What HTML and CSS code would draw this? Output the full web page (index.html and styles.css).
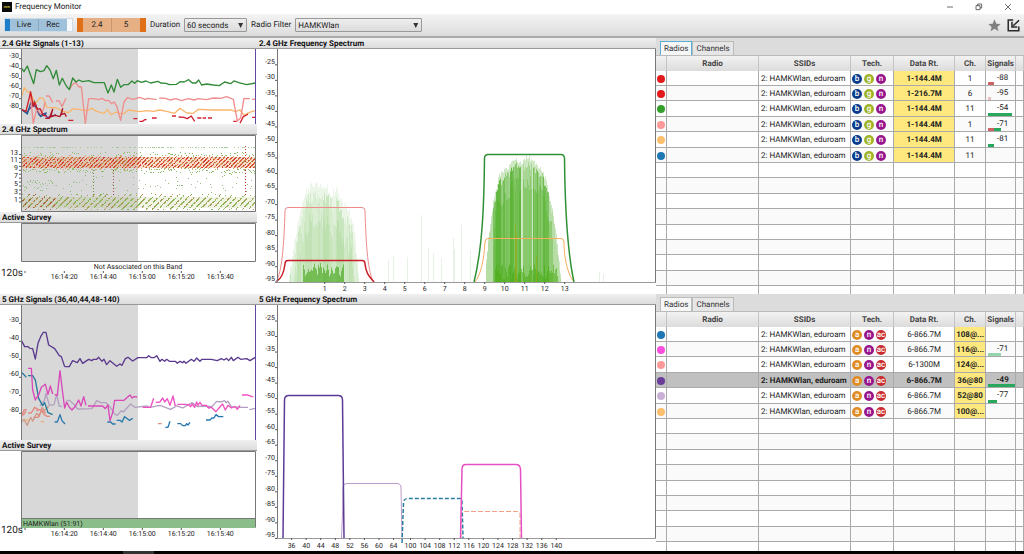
FILE: index.html
```html
<!DOCTYPE html>
<html lang="en">
<head>
<meta charset="utf-8">
<title>Frequency Monitor</title>
<link rel="stylesheet" href="styles.css">
</head>
<body>
<header class="titlebar">
  <svg class="app-icon" viewBox="0 0 30 30"><rect width="30" height="30" fill="#0a0a0a"/><path d="M5 13h20v4H5z" fill="#8d8420"/><path d="M8 14h3M13 14h3M18 14h4" stroke="#e8d840" stroke-width="2"/></svg>
  <h1>Frequency Monitor</h1>
  <div class="window-buttons">
    <button aria-label="Minimize"><svg viewBox="0 0 24 24"><path d="M3 12h18"/></svg></button>
    <button aria-label="Restore"><svg viewBox="0 0 24 24"><path d="M3 8h12v12H3zM8 8V3h12v12h-5"/></svg></button>
    <button aria-label="Close"><svg viewBox="0 0 24 24"><path d="M3 3l18 18M21 3L3 21"/></svg></button>
  </div>
</header>
<nav class="toolbar">
  <div class="group blue"><button>Live</button><button>Rec</button></div>
  <div class="group orange"><button>2.4</button><button>5</button></div>
  <label for="duration">Duration</label>
  <span class="select short"><select id="duration"><option>60 seconds</option></select></span>
  <label for="filter">Radio Filter</label>
  <span class="select long"><select id="filter"><option>HAMKWlan</option></select></span>
  <div class="tools">
    <button aria-label="Favorite"><svg viewBox="0 0 36 36"><path d="M18 1l5 12 12 1-9 8 3 12-11-7-11 7 3-12-9-8 12-1z" fill="#808080"/></svg></button>
    <button aria-label="Import"><svg viewBox="0 0 42 42"><path d="M20 3H4v35h34V24" fill="none" stroke="#2d2d2d" stroke-width="5"/><path d="M39 4L20 22M16 9v17h17" fill="none" stroke="#2d2d2d" stroke-width="5"/></svg></button>
  </div>
</nav>
<main>
  <section class="charts">
    <h2>2.4 GHz Signals (1-13)</h2>
    <svg id="sig24" viewBox="0 49 257 75">
      <rect class="past" x="21" y="49" width="117" height="75"/>
      <g class="lines" transform="translate(0 36) scale(.3333)">
        <polyline stroke="#6a3d9a" points="64,221 80,230 100,205 108,215 118,238 134,232 142,245 168,236"/>
        <polyline stroke="#1f5f8f" points="64,219 82,234 92,200 98,208 102,194 112,220 122,242 140,230"/>
        <polyline stroke="#f9b56b" points="64,185 73,155 82,168 90,167 96,180 104,205 120,185 130,188 140,214 170,216 190,226 206,230 218,218 260,224 275,217 290,226 312,232 322,221 333,235 350,228 360,233 372,233 385,222 420,227 440,224 460,226 480,222 500,226 524,232 540,217 560,231 580,232 595,220 640,222 694,222 706,227 720,222 732,238 748,229 766,224"/>
        <polyline stroke="#f08d8d" points="90,167 100,262 110,218 122,235 130,220 136,198"/>
        <polyline stroke="#f08d8d" points="138,180 148,180 158,200"/>
        <polyline stroke="#f08d8d" points="168,195 178,195 186,212 198,187"/>
        <polyline stroke="#f08d8d" points="208,160 218,145 228,139 236,153 244,152 256,262 266,188 280,188 296,191 306,187 316,194 326,193 334,203 342,198 350,210 362,253 372,198 382,185 400,190 418,184 436,190 444,187 470,191"/>
        <polyline stroke="#f08d8d" points="478,186 496,187 510,192 528,188 544,194 566,188 582,192 596,188 620,191 640,186 662,187 680,182 700,190 712,255 722,246 732,187 750,188"/><path stroke="#f08d8d" d="M756 190h12"/>
        <polyline stroke="#cc2028" points="64,220 78,226 92,168 100,212 104,198 112,220 120,218 130,238 138,240"/>
        <polyline stroke="#b01525" points="136,247 148,247 158,220 152,243 166,238 180,242 188,218 184,236 194,232 199,242"/>
        <path stroke="#d32030" d="M205 253h15M400 248h12M418 256h10l6-5h6M456 246h14M516 240h12M536 243l16 1l10 4l12-8l10 16M592 246h12M608 246h10M624 246h12M700 256h10M720 262l10-20l10-5l4-3M756 244h11"/>
        <polyline stroke="#308a38" points="64,96 72,107 82,90 101,143 109,101 121,107 132,104 140,89 150,102 160,128 169,103 178,147 187,127 199,150 208,161 218,126 228,138 236,132 248,137 266,134 282,140 313,140 324,171 334,147 342,168 352,130 362,154 372,146 384,146 396,135 404,142 412,134 424,139 438,135 452,141 474,136 482,141 498,142 508,146 530,145 540,137 552,138 566,131 577,141 588,141 596,132 605,147 620,144 640,147 658,149 674,138 692,143 702,135 716,140 740,146 766,141"/>
      </g>
      <path class="axis" d="M21.500 49V124"/><path stroke="#6048a0" d="M255.500 49V124"/>
    </svg>
    <h2>2.4 GHz Spectrum</h2>
    <svg id="spec24" viewBox="0 135 257 77"><rect class="past" x="21" y="135" width="117" height="77"/><rect x="22" y="157" width="233" height="11" fill="#e8803c" opacity=".28"/><rect x="22" y="197" width="233" height="11" fill="#a0b850" opacity=".15"/><g id="noise"></g><path class="frame" d="M21.500 135.500H255.500V211.500H21.500z"/></svg>
    <h2>Active Survey</h2>
    <svg id="time24" viewBox="0 223 257 71"><rect class="past" x="21" y="223" width="117" height="38"/><path class="frame" d="M21.500 223.500H255.500V261.500H21.500z"/><text class="note" x="138" y="269">Not Associated on this Band</text><text class="span" x="1" y="276">120s</text></svg>
  </section>
  <section class="charts">
    <h2>2.4 GHz Frequency Spectrum</h2>
    <svg id="freq24" viewBox="257 49 399 245">
      <g id="bins"></g>
      <g class="lines thin">
        <path stroke="#e57f7f" d="M374 282.500H475"/>
        <path stroke="#ee8a8a" d="M276 282C282 272 284 245 285 211Q285 207.500 288 207.500H362Q365 207.500 365 211C366 245 368 275 374 282"/>
        <path class="bold" stroke="#c81e28" d="M277 281C282 278 284 272 285 264Q285 260.500 288 260.500H362Q365 260.500 365 264C366 274 370 277 374 282"/>
        <path stroke="#f7ae5e" d="M475 282C480 276 484 262 485 242Q485 238.500 488 238.500H561Q564 238.500 564 242C564 262 569 276 574 282"/>
        <path class="bold" stroke="#2f9136" d="M474 282C482 250 484 210 484.500 158Q485 154.500 488 154.500H561Q564 154.500 564.500 158C565 210 567 250 574 282"/>
      </g>
      <path class="axis" d="M277.500 49V282.500M574 282.500H655.500V49"/><path class="floor" d="M277 282.500H655"/>
    </svg>
  </section>
  <section class="panel" id="panel24"></section>
  <section class="charts">
    <h2>5 GHz Signals (36,40,44,48-140)</h2>
    <svg id="sig5" viewBox="0 305 257 135">
      <rect class="past" x="21" y="305" width="117" height="135"/>
      <g class="lines" transform="translate(0 290) scale(.3333)">
        <polyline stroke="#d09a88" points="64,397 72,388 82,406 92,382 98,394 110,370 118,378 126,352 134,362 146,348"/>
        <path stroke="#e08a80" d="M64 380l8-20l8-2M70 376l8-14M84 369h10l10-17l14 8M100 382h14l12-22l12 10M108 362l16-4l8 16l10 5h8M474 401h11"/>
        <path stroke="#eab070" d="M122 395h10M76 390h10"/>
        <polyline stroke="#b3a0c0" points="120,348 134,330 138,310 148,346 162,344 170,314 178,348 186,350"/>
        <polyline stroke="#b3a0c0" points="200,331 208,331 224,345 232,357 276,356 290,332 302,338 318,338 328,348 344,372 352,376 364,362 370,366 392,342 404,352 440,348 450,352 480,346 500,354 512,358 530,348 548,354 576,338 592,350 612,348 636,350 650,334 664,336 674,332 678,338 684,334 694,350 720,352 744,352"/><path stroke="#b3a0c0" d="M748 359l18-4"/>
        <polyline stroke="#28789c" points="64,247 72,254 79,262"/><polyline stroke="#28789c" points="84,257 98,257 106,270 116,325 128,347 134,338 144,368 158,374"/>
        <path stroke="#2878ac" d="M164 396h8l8-22l6 18l9 10M322 396h10l6 6h9M350 391h10l6 5l8-16l14 11l10-6M496 412h8l6-18M532 401h10l6 6h8l4-6l4 4l6-8M618 390h12l6-6h6l6-10l8 6h14"/>
        <polyline stroke="#d948b8" points="84,235 94,235 98,300 106,330 116,315 124,292 136,283 144,313 151,288 158,312"/><polyline stroke="#d948b8" points="164,314 172,316 180,242 187,300 194,354 200,336 208,352 216,360 226,349 236,330 243,348 251,320 258,346"/>
        <polyline stroke="#d948b8" points="264,348 308,348 316,356 324,345 330,392 338,368 344,331 372,331 390,315 396,324 402,320 411,321"/>
        <polyline stroke="#ee50c0" points="428,352 452,352 461,325"/><polyline stroke="#ee50c0" points="467,337 480,336 488,324 494,336 502,326 510,346 519,318 526,348"/><polyline stroke="#ee50c0" points="532,343 550,343 566,344 572,350 576,342 584,352 590,336 594,346 600,337 606,346 618,346 626,354 634,352 648,365 662,348 668,342 676,360 684,346 694,354 706,350 712,358 720,346"/><path stroke="#ee50c0" d="M726 315h16l14 5h4"/>
        <polyline stroke="#5b3a8e" points="64,151 74,170 84,170 90,175 98,176 106,207 114,160 122,140 130,127 138,127 146,165 164,176 178,197 184,200 194,230"/>
        <polyline stroke="#5b3a8e" points="194,230 208,230 218,212 232,218 240,206 248,220 266,208 276,212 280,208 290,208 296,202 306,214 312,208 320,224 330,212 350,229 360,222 366,226 376,206 384,202 398,213 414,203 440,203 446,197 454,203 462,203 470,197 480,214 486,208 494,214 500,208 508,214 526,214 532,220 540,214 548,218 552,214 558,220 574,208 582,214 590,204 600,214 606,208 634,208 652,212 664,206 672,210 680,205 686,212 694,202 700,212 714,202 722,208 740,206 750,212 766,202"/>
      </g>
      <path class="axis" d="M21.500 305V440"/><path stroke="#6048a0" d="M255.500 305V440"/>
    </svg>
    <h2>Active Survey</h2>
    <svg id="time5" viewBox="0 451 257 100"><rect class="past" x="21" y="451" width="117" height="67"/><rect x="21" y="518" width="235" height="10" fill="#8bbd8b"/><path class="frame" d="M21.500 527V451.500H255.500V527M21 518.500H256"/><text x="23" y="526">HAMKWlan (51:91)</text><text class="span" x="1" y="533">120s</text></svg>
  </section>
  <section class="charts">
    <h2>5 GHz Frequency Spectrum</h2>
    <svg id="freq5" viewBox="257 305 399 246">
      <path class="axis" d="M277.500 305V538.500M655.500 305V538.500"/><path class="floor" d="M277 538.500H655.500"/>
      <g class="lines thin">
        <path stroke="#bb9bc9" d="M341.500 538Q343 510 343 487Q343 483.500 347 483.500H397Q401 483.500 401 488L402 538"/>
        <path class="bold" stroke="#5b3a96" d="M283 538L284.500 400Q284.500 395.500 289 395.500H338Q342.500 395.500 342.500 400L344 538"/>
        <path class="bold" stroke="#2a7f9f" stroke-dasharray="4 2" d="M402 543L403.500 503Q403.500 498.500 408 498.500H460Q462 498.500 462 503L463 538"/>
        <path stroke="#f2a080" stroke-dasharray="5 2" d="M461 538V515Q461 511.500 465 511.500H517Q520 511.500 520 515V538"/>
        <path class="bold" stroke="#e64fc4" d="M460.500 538L462 469Q462 464.500 466 464.500H516Q520 464.500 520.500 469L521.500 538"/>
      </g>
    </svg>
  </section>
  <section class="panel" id="panel5"></section>
</main>
<footer class="taskbar"></footer>
<script src="app.js"></script>
</body>
</html>
```

FILE: styles.css
```css
* { box-sizing: border-box; }
body { margin: 0; height: 100vh; display: flex; flex-direction: column; overflow: hidden; background: #fff; color: #222; font: 8px/10px Roboto, "Liberation Sans", sans-serif; text-rendering: geometricPrecision; }
button, select { font: inherit; color: inherit; border: 0; padding: 0; margin: 0; background: none; text-rendering: inherit; }
h1, h2 { margin: 0; }
.titlebar { height: 14px; flex: none; display: flex; align-items: center; gap: 3px; padding-left: 2px; }
.titlebar h1 { font-size: 8px; line-height: 12px; font-weight: 400; }
.app-icon { width: 10px; height: 10px; }
.window-buttons { margin-left: auto; display: flex; gap: 21px; padding-right: 12px; }
.window-buttons button { display: flex; }
.window-buttons svg { width: 8px; height: 8px; fill: none; stroke: #222; stroke-width: 2; }
.toolbar { height: 24px; flex: none; display: flex; align-items: center; gap: 4px; padding: 0 4px; background: linear-gradient(#f4f4f4, #dcdcdc); border-bottom: 2px solid #aaa; }
.group { display: flex; height: 14px; width: 69px; border: solid; border-width: 0 6px; }
.group button { flex: 1; }
.group button + button { border-left: 1px solid #0002; }
.blue { background: #9fc1da; border-color: #1f7fca #f6fafd #1f7fca #1f7fca; outline: 1px solid #cfdce6; outline-offset: -1px; }
.orange { background: #e6b084; border-color: #e07018; }
.select { position: relative; display: flex; }
.select::after { content: ""; position: absolute; right: 4px; top: 5px; width: 5px; height: 5px; background: #333; clip-path: polygon(0 0, 100% 0, 50% 100%); pointer-events: none; }
.select select { appearance: none; width: 100%; height: 14px; padding: 1px 0 0 2px; border: 1px solid #999; border-radius: 1px; background: linear-gradient(#eee, #dcdcdc); }
.short { width: 63px; }
.long { width: 127px; }
.tools { margin-left: auto; display: flex; gap: 6px; }
.tools button { display: flex; }
.tools svg { width: 13px; height: 13px; }
main { flex: 1; min-height: 0; display: grid; grid-template-columns: 257fr 399fr 368fr; grid-template-rows: 256fr 257fr; }
.charts, .panel { min-width: 0; min-height: 0; overflow: hidden; }
.charts h2 { height: 11px; padding-left: 2px; font-size: 8px; line-height: 12px; font-weight: 700; color: #111; background: linear-gradient(#f0f0f0, #dcdcdc); border-bottom: 1px solid #999; }
.charts svg { display: block; width: 100%; height: auto; }
.charts text { font-size: 7px; fill: #222; }
.charts .span { font-size: 10px; }
.charts .note, .charts .mid { text-anchor: middle; }
.charts .end { text-anchor: end; }
.past { fill: #d8d8d8; }
.axis, .frame { fill: none; stroke: #777; }
.floor { stroke: #999; }
.tick { stroke: #555; }
.lines { fill: none; stroke-width: 4; stroke-linejoin: round; }
.thin { stroke-width: 1; }
.thin .bold { stroke-width: 1.5; }
.panel { background: #fff; }
.tabs { height: 18px; display: flex; align-items: flex-end; padding: 0 4px; background: #dcdcdc; border-bottom: 1px solid #bbb; }
.tabs button { height: 14px; padding: 1px 3px 0; border: 1px solid #bbb; border-bottom: 0; background: #e6e6e6; color: #333; }
.tabs .active { background: #f6f6f6; }
.tabs .focus { border-color: #58b0d4; }
.panel table { width: 100%; table-layout: fixed; border-spacing: 0; }
.panel th, .panel td { height: 15px; padding: 1px 0 0; overflow: hidden; white-space: nowrap; text-align: center; border: solid #aaa; border-width: 0 1px 1px 0; line-height: 10px; }
.panel th { font-weight: 700; color: #444; background: linear-gradient(#f2f2f2, #dcdcdc); border-color: #c4c4c4; border-bottom: 0; }
.panel tr:nth-child(5n) td, .panel tr:nth-child(5n-2) td { height: 16px; }
.panel tr:nth-child(even) td { background: #fafafa; }
.panel tbody tr.selected td { background: #c0c0c0; font-weight: 700; }
.panel tbody tr td.hot { background: #ffe97f; font-weight: 700; }
.panel td.ssid { text-align: left; padding-left: 2px; }
.c-dot { width: 3%; }
.c-wide { width: 25%; }
.c-tech { width: 11.7%; }
.c-rate { width: 16.6%; }
.c-ch { width: 8.4%; }
.c-sig { width: 8.2%; }
.dot { display: block; width: 8px; height: 8px; margin: 0 auto; border-radius: 50%; }
.badges { display: flex; gap: 2px; padding-left: 1px; }
.badges b { width: 10px; height: 10px; border-radius: 50%; color: #fff; font-weight: 500; line-height: 10px; }
.b { background: #0a3c8c; }
.g { background: #a0b428; }
.n { background: #98168c; }
.a { background: #e08c24; }
.ac { background: #c82a30; }
.panel td.sig { position: relative; padding: 0 0 2px 4px; line-height: 9px; }
.bar { position: absolute; left: 2px; bottom: 0; height: 3px; display: flex; }
.taskbar { height: 3px; flex: none; background: linear-gradient(90deg, #000 12%, #333 12% 15%, #000 15%); }
```

FILE: app.js
```js
const NS = 'http://www.w3.org/2000/svg';
const byId = id => document.getElementById(id);
function add(parent, tag, attrs, text) {
  const el = document.createElementNS(NS, tag);
  for (const k in attrs) el.setAttribute(k, attrs[k]);
  if (text !== undefined) el.textContent = text;
  parent.appendChild(el);
}
let seed = 7;
const rnd = () => (seed = (seed * 16807) % 2147483647) / 2147483647;

function yAxis(id, x, first, last, step, y0, dy) {
  let y = y0;
  for (let v = first; v >= last; v -= step, y += dy) {
    add(byId(id), 'path', { class: 'tick', d: `M${x - 2} ${y}h2` });
    add(byId(id), 'text', { class: 'end', x: x - 2, y: y - 1 }, v);
  }
}
yAxis('sig24', 21, -30, -80, 10, 58.7, 10);
yAxis('sig5', 21, -30, -80, 10, 323.3, 18);
yAxis('freq24', 277, -25, -95, 5, 64.8, 15.53);
yAxis('freq5', 277, -25, -95, 5, 321, 15.53);

for (let c = 13; c >= 1; c--) {
  const y = 154.500 + (13 - c) * 3.95;
  add(byId('spec24'), 'path', { class: 'tick', d: `M19 ${y}h2` });
  if (c % 2) add(byId('spec24'), 'text', { class: 'end', x: 18, y }, c);
}
function xTick(id, x, y, label, gap) {
  add(byId(id), 'path', { class: 'tick', d: `M${x} ${y}v2` });
  if (label) add(byId(id), 'text', { class: 'mid', x, y: y + gap }, label);
}
[['time24', 271, 8], ['time5', 528, 8]].forEach(([id, y, gap]) => {
  xTick(id, 25, y, '', gap);
  ['16:14:20', '16:14:40', '16:15:00', '16:15:20', '16:15:40'].forEach((t, i) => xTick(id, 64.3 + i * 39, y, t, gap));
});
for (let c = 1; c <= 13; c++) xTick('freq24', 324.7 + (c - 1) * 20, 282, c, 9);
for (let i = 0; i < 8; i++) xTick('freq5', 291.6 + i * 14.57, 538, 36 + i * 4, 10);
for (let i = 0; i < 11; i++) xTick('freq5', 410.500 + i * 14.58, 538, 100 + i * 4, 10);

const dots = {};
const dot = (color, x, y) => { dots[color] = (dots[color] || '') + `M${x} ${y}h1v1h-1z`; };
const pick = list => list[Math.floor(rnd() * list.length)];
for (let x = 22; x < 255; x++) {
  for (let y = 155; y < 170; y++) {
    const edge = y < 157 || y > 167;
    if ((x + y) % 4 < 2 && rnd() < (edge ? .3 : .8)) dot(edge ? pick(['#9cc070', '#e0a070']) : pick(['#cf3b32', '#d95c3c', '#df8a50', '#b88a48', '#d8403a']), x, y);
  }
  for (let y = 194; y < 210; y++) {
    const edge = y < 198 || y > 206;
    if ((x + y) % 6 < 2 && rnd() < (edge ? .35 : .8)) dot(x < 55 ? pick(['#a85a3c', '#8fae60', '#b88850']) : pick(['#7fb850', '#a8b060', '#96c070', '#b09058']), x, y);
  }
  if (rnd() < .4) dot('#a8c898', x, 147);
  if (rnd() < .5) dot('#8fbd70', x, 169 + Math.floor(rnd() * 4));
  if (rnd() < (x < 55 ? .9 : .25)) dot('#9cc090', x, 180 + Math.floor(rnd() * 9));
  if (rnd() < .2) dot('#8fb870', x, 172 + Math.floor(rnd() * 22));
  if (rnd() < .3) dot('#90b860', x, 152 + Math.floor(rnd() * 4));
}
for (let y = 146; y < 196; y += 3) { dot('#c83030', 245, y); if (y > 168) { dot('#a05040', 113, y); dot('#709050', 93, y); } }
for (const color in dots) add(byId('noise'), 'path', { fill: color, d: dots[color] });

function envelope(points, x) {
  for (let i = 1; i < points.length; i++) if (x <= points[i][0]) {
    const [x0, y0] = points[i - 1], [x1, y1] = points[i];
    return y0 + (y1 - y0) * (x - x0) / (x1 - x0);
  }
  return 282;
}
function bin(x, top, fill, opacity) {
  if (top < 282) add(byId('bins'), 'rect', { x, y: top, width: 1, height: 282 - top, fill, opacity });
}
const weak = [[288, 280], [293, 245], [298, 215], [304, 192], [308, 184], [315, 181], [325, 182], [331, 190], [336, 186], [342, 200], [348, 206], [353, 222], [357, 255], [359, 282]];
let shade = .2;
for (let x = 288; x < 359; x++) {
  const top = envelope(weak, x);
  if (rnd() < .45) shade = .06 + rnd() * .22;
  bin(x, top + rnd() * 8, '#60b840', .12);
  bin(x, top + 8 + rnd() * 14, '#60b840', shade);
  bin(x, top + 30 + rnd() * 20, '#60b840', .12);
  if (x > 302 && x < 344) bin(x, 263 + rnd() * 14, '#46a81c', .65);
}
const strong = [[484, 275], [488, 235], [492, 205], [498, 174], [505, 167], [510, 162], [515, 155], [520, 160], [527, 154], [535, 160], [542, 167], [547, 182], [552, 205], [557, 240], [561, 282]];
for (let x = 486; x < 561; x++) {
  const top = envelope(strong, x), gap = x === 521 || x === 522 || x === 532;
  if (rnd() < .45) shade = .3 + rnd() * .6;
  bin(x, top + rnd() * 6, '#58b234', .3);
  if (!gap) {
    bin(x, top + 6 + rnd() * 8, '#58b234', x > 492 && x < 549 ? shade : .2);
    if (x > 493 && x < 553) bin(x, top + 20 + rnd() * 16, '#4cae20', .35);
  }
  if (x > 494 && x < 558) bin(x, 264 + rnd() * 15, '#4aac14', .6);
}
bin(515, 225, '#9aaa10', .7);
bin(516, 235, '#9aaa10', .6);
bin(536, 255, '#9aaa10', .6);
[[388, 260], [393, 256], [407, 257], [421, 215], [428, 248], [433, 253], [441, 258], [453, 238], [454, 250], [461, 225], [470, 250], [599, 272], [603, 274]].forEach(([x, y]) => bin(x, y, '#60a050', .15));

const columns = ['dot', 'wide', 'wide', 'tech', 'rate', 'ch', 'sig', 'end'];
const heads = ['', 'Radio', 'SSIDs', 'Tech.', 'Data Rt.', 'Ch.', 'Signals', ''];
function panel(id, focus, hot, tech, rows) {
  let body = '';
  for (let i = 0; i < 15; i++) {
    const r = rows[i];
    if (!r) { body += '<tr>' + '<td></td>'.repeat(8) + '</tr>'; continue; }
    const [color, rate, ch, sig, bars, selected] = r;
    body += `<tr class="${selected ? 'selected' : ''}"><td><span class="dot" style="background:${color}"></span></td><td></td>
      <td class="ssid">2: HAMKWlan, eduroam</td>
      <td><div class="badges">${tech.map(t => `<b class="${t}">${t}</b>`).join('')}</div></td>
      <td class="${hot === 'rate' ? 'hot' : ''}">${rate}</td><td class="${hot === 'ch' ? 'hot' : ''}">${ch}</td>
      <td class="sig">${sig}<span class="bar">${bars.map(([w, c]) => `<i style="width:${w}px;background:${c}"></i>`).join('')}</span></td><td></td></tr>`;
  }
  byId(id).innerHTML = `<div class="tabs"><button class="active ${focus}">Radios</button><button>Channels</button></div>
    <table><colgroup>${columns.map(c => `<col class="c-${c}">`).join('')}</colgroup>
    <thead><tr>${heads.map(h => `<th>${h}</th>`).join('')}</tr></thead><tbody>${body}</tbody></table>`;
}
const green = '#28a85c', red = '#cd6464';
panel('panel24', 'focus', 'rate', ['b', 'g', 'n'], [
  ['#e31a1c', '1-144.4M', '1', '-88', [[6, red]]],
  ['#e31a1c', '1-216.7M', '6', '-95', [[3, '#e8c0c0']]],
  ['#33a02c', '1-144.4M', '11', '-54', [[24, green]]],
  ['#fb9a99', '1-144.4M', '1', '-71', [[6, red], [7, green]]],
  ['#fdbf6f', '1-144.4M', '11', '-81', [[6, green]]],
  ['#1f78b4', '1-144.4M', '11', '', []]
]);
panel('panel5', '', 'ch', ['a', 'n', 'ac'], [
  ['#1f78b4', '6-866.7M', '108@...', '', []],
  ['#f94fdc', '6-866.7M', '116@...', '-71', [[13, '#94d4ac']]],
  ['#fb9a99', '6-1300M', '124@...', '', []],
  ['#6a3d9a', '6-866.7M', '36@80', '-49', [[28, green]], true],
  ['#cab2d6', '6-866.7M', '52@80', '-77', [[9, green]]],
  ['#fdbf6f', '6-866.7M', '100@...', '', []]
]);
```
